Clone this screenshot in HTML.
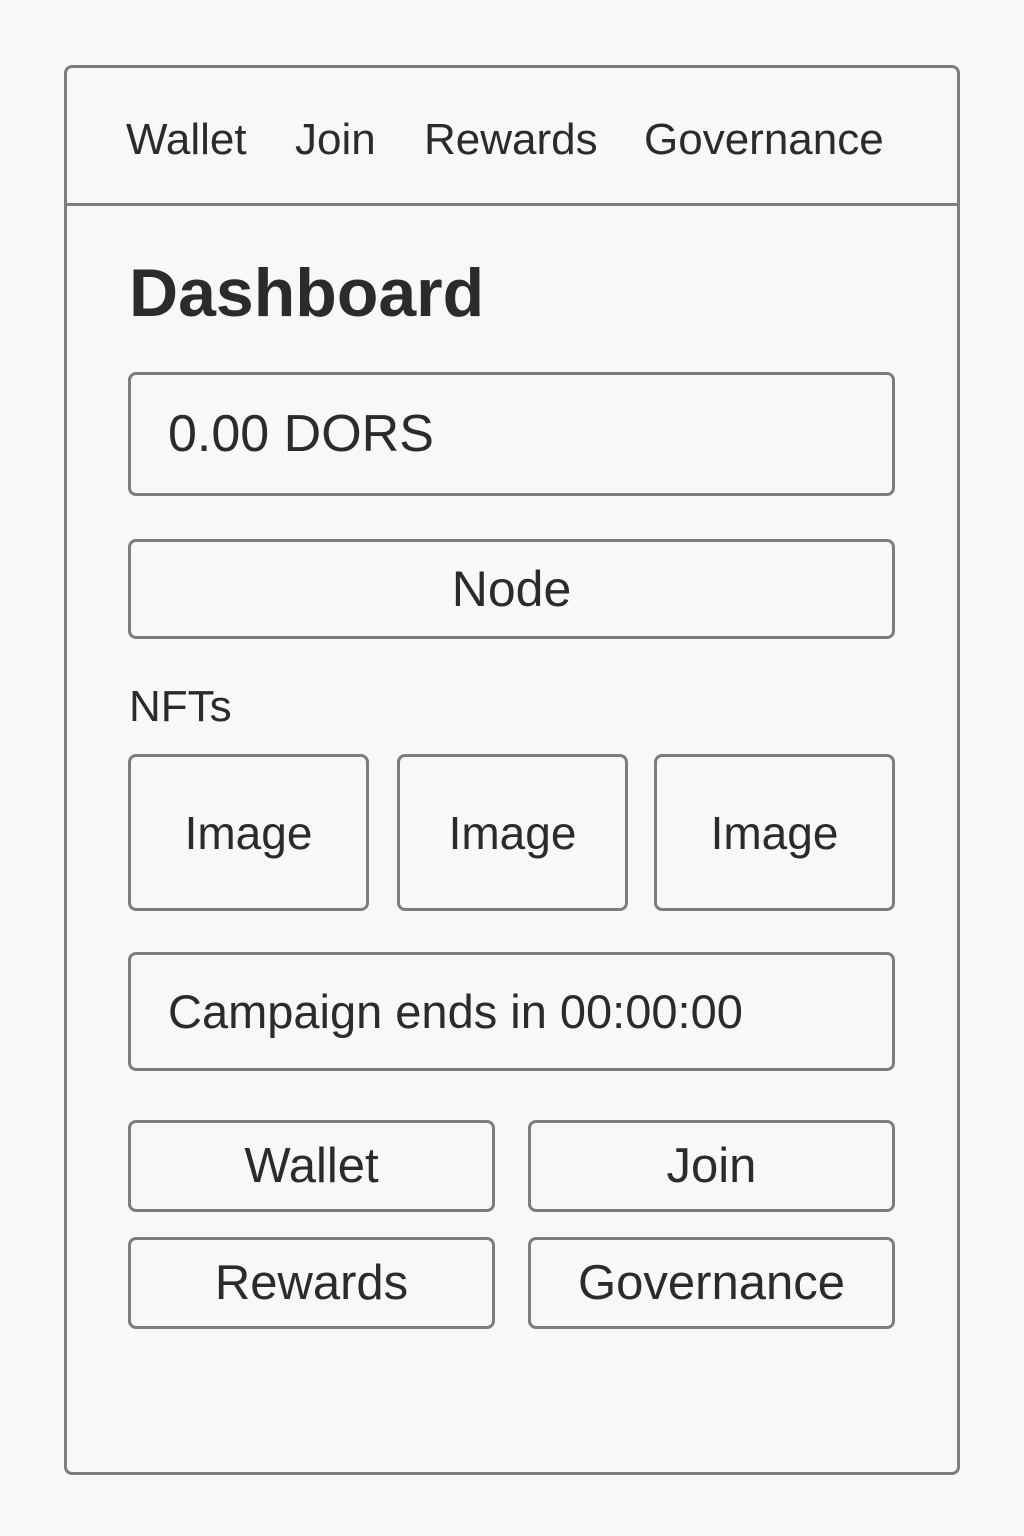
<!DOCTYPE html>
<html><head><meta charset="utf-8"><style>
*{box-sizing:border-box;margin:0;padding:0}
body{width:1024px;height:1536px;background:#f8f8f8;font-family:"Liberation Sans",sans-serif;color:#2b2b2b;position:relative;overflow:hidden}
.a{position:absolute}
.box{position:absolute;border:3px solid #7d7d7d;border-radius:8px;background:#f8f8f8}
.c{display:flex;align-items:center;justify-content:center}
.nav{position:absolute;top:116px;font-size:44px;line-height:48px}
</style></head><body>
<div class="box" style="left:64px;top:65px;width:896px;height:1410px;border-radius:8px"></div>
<div class="a" style="left:66px;top:203px;width:892px;height:3px;background:#7d7d7d"></div>
<div class="nav" style="left:126px">Wallet</div>
<div class="nav" style="left:295px">Join</div>
<div class="nav" style="left:424px">Rewards</div>
<div class="nav" style="left:644px">Governance</div>
<div class="a" style="left:129px;top:255px;font-size:68px;font-weight:bold;line-height:76px">Dashboard</div>
<div class="box" style="left:128px;top:372px;width:767px;height:124px;display:flex;align-items:center;padding-left:37px;font-size:52px">0.00 DORS</div>
<div class="box c" style="left:128px;top:539px;width:767px;height:100px;font-size:50px">Node</div>
<div class="a" style="left:129px;top:683px;font-size:44px;line-height:48px">NFTs</div>
<div class="box c" style="left:128px;top:754px;width:241px;height:157px;font-size:46px">Image</div>
<div class="box c" style="left:397px;top:754px;width:231px;height:157px;font-size:46px">Image</div>
<div class="box c" style="left:654px;top:754px;width:241px;height:157px;font-size:46px">Image</div>
<div class="box" style="left:128px;top:952px;width:767px;height:119px;display:flex;align-items:center;padding-left:37px;font-size:47px">Campaign ends in 00:00:00</div>
<div class="box c" style="left:128px;top:1120px;width:367px;height:92px;font-size:49px">Wallet</div>
<div class="box c" style="left:528px;top:1120px;width:367px;height:92px;font-size:49px">Join</div>
<div class="box c" style="left:128px;top:1237px;width:367px;height:92px;font-size:49px">Rewards</div>
<div class="box c" style="left:528px;top:1237px;width:367px;height:92px;font-size:49px">Governance</div>
</body></html>
